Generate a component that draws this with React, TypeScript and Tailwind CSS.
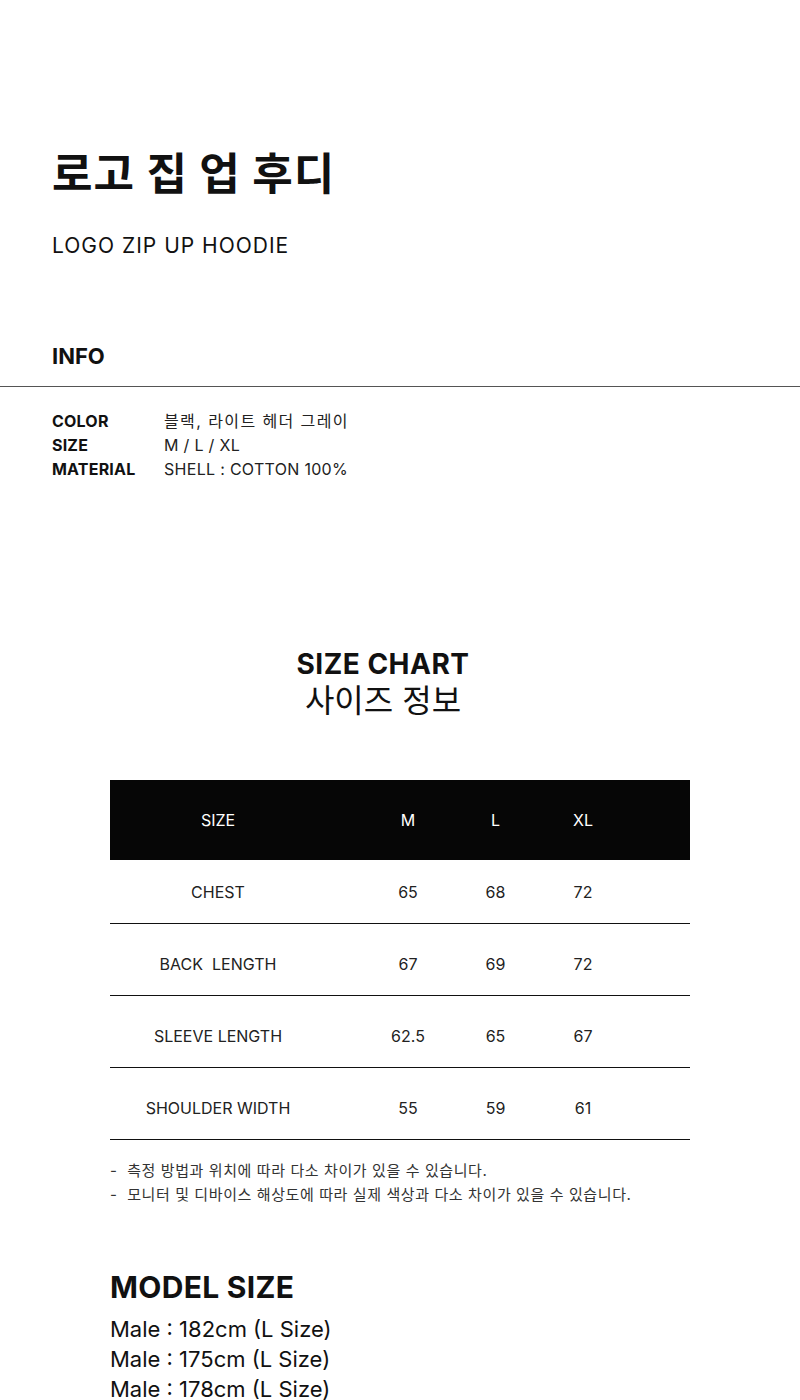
const font = "font-['Inter','Noto_Sans_CJK_KR',sans-serif]";

const infoRows = [
  { label: "COLOR", value: "블랙, 라이트 헤더 그레이", ko: true },
  { label: "SIZE", value: "M / L / XL", ko: false },
  { label: "MATERIAL", value: "SHELL : COTTON 100%", ko: false },
];

const sizeRows = [
  { name: "CHEST", m: "65", l: "68", xl: "72" },
  { name: "BACK  LENGTH", m: "67", l: "69", xl: "72" },
  { name: "SLEEVE LENGTH", m: "62.5", l: "65", xl: "67" },
  { name: "SHOULDER WIDTH", m: "55", l: "59", xl: "61" },
];

const models = ["Male : 182cm (L Size)", "Male : 175cm (L Size)", "Male : 178cm (L Size)"];

export default function App() {
  return (
    <main className={`w-[800px] h-[1400px] overflow-hidden bg-white text-[#111] ${font}`}>
      {/* Title */}
      <section className="px-[52px] pt-[146px]">
        <h1 className="text-[44px] leading-[56px] font-bold tracking-[1px]">로고 집 업 후디</h1>
        <p className="mt-[30px] text-[21px] leading-[28px] tracking-[1px]">LOGO ZIP UP HOODIE</p>
      </section>

      {/* Info */}
      <section className="mt-[82px]">
        <h2 className="px-[52px] text-[22px] leading-[28px] font-bold">INFO</h2>
        <div className="mt-[16px] border-t border-[#555]" />
        <div className="px-[52px] pt-[22px] flex flex-col">
          {infoRows.map((row) => (
            <div key={row.label} className="flex text-[16px] leading-[24px]">
              <span className="w-[112px] font-bold tracking-[0.2px]">{row.label}</span>
              <span className={row.ko ? "text-[#222] tracking-[1.4px]" : "text-[#222] tracking-[0.3px]"}>
                {row.value}
              </span>
            </div>
          ))}
        </div>
      </section>

      {/* Size chart */}
      <section className="mt-[166px] pr-[34px] flex flex-col items-center">
        <h2 className="text-[28px] leading-[34px] font-bold tracking-[0.5px]">SIZE CHART</h2>
        <p className="text-[32px] leading-[40px]">사이즈 정보</p>
      </section>

      <section className="mx-[110px] mt-[59px]">
        <div className="grid grid-cols-[254px_88px_87px_88px_1fr] h-[80px] items-center bg-[#060606] text-white text-[16px]">
          <span className="pr-[38px] text-center">SIZE</span>
          <span className="text-center">M</span>
          <span className="text-center">L</span>
          <span className="text-center">XL</span>
          <span />
        </div>
        {sizeRows.map((row, i) => (
          <div
            key={row.name}
            className={`grid grid-cols-[254px_88px_87px_88px_1fr] items-center border-b border-[#111] text-[16px] text-[#222] ${
              i === 0 ? "h-[64px]" : "h-[72px] pt-[8px]"
            }`}
          >
            <span className="pr-[38px] text-center whitespace-pre">{row.name}</span>
            <span className="text-center">{row.m}</span>
            <span className="text-center">{row.l}</span>
            <span className="text-center">{row.xl}</span>
            <span />
          </div>
        ))}
        <div className="mt-[19px] text-[15px] leading-[24px] text-[#333] tracking-[0.6px]">
          <p>-&nbsp; 측정 방법과 위치에 따라 다소 차이가 있을 수 있습니다.</p>
          <p>-&nbsp; 모니터 및 디바이스 해상도에 따라 실제 색상과 다소 차이가 있을 수 있습니다.</p>
        </div>
      </section>

      {/* Model size */}
      <section className="mx-[110px] mt-[62px]">
        <h2 className="text-[30px] leading-[36px] font-bold tracking-[0.3px]">MODEL SIZE</h2>
        <div className="mt-[9px] flex flex-col text-[22px] leading-[30px]">
          {models.map((m, i) => (
            <p key={i}>{m}</p>
          ))}
        </div>
      </section>
    </main>
  );
}
